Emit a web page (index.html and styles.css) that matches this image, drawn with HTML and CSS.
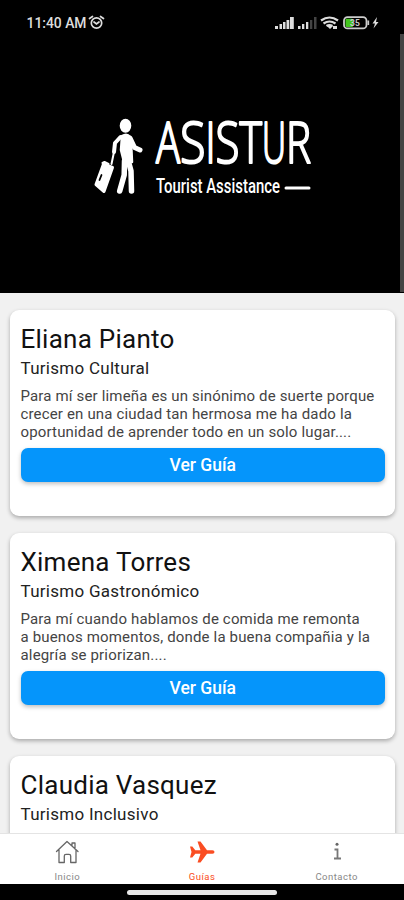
FILE: index.html
```
<!DOCTYPE html>
<html lang="es">
<head>
<meta charset="utf-8">
<meta name="viewport" content="width=device-width, initial-scale=1">
<title>Asistur</title>
<link rel="stylesheet" href="styles.css">
</head>
<body>
<div class="phone">
  <header class="status">
    <svg width="404" height="34" viewBox="0 0 404 34">
      <text class="clock" x="26.500" y="28" textLength="60" lengthAdjust="spacingAndGlyphs">11:40 AM</text>
      <g fill="none" stroke="#ddd" stroke-width="1.700" stroke-linecap="round">
        <circle cx="96.500" cy="23" r="5.200"/>
        <path d="M89.500 18.500l3-2M103.500 18.500l-3-2M94 22l2.500 2 2.500-2"/>
      </g>
      <g fill="#ddd">
        <path d="M275 26h3v3h-3zM279.500 24h2.500v5h-2.500zM283 22h2.500v7H283zM286.500 20h2.800v9h-2.800zM290 17h3.800v12H290z"/>
        <path d="M298 26h2.500v3H298zM302 24h2.300v5H302zM306 22h2.300v7H306z"/>
        <path fill="#444" d="M310 20h2.300v9H310zM314 17h2.500v12H314z"/>
      </g>
      <g fill="none" stroke="#ddd" stroke-width="2.200">
        <path d="M321 20.500q8.500-6 17 0M323.500 23.500q6-4 12 0M326.500 26q3-2 6 0"/>
      </g>
      <path d="M327 26l3 3 3-3zM333 26h4v3h-4z" fill="#ddd"/>
      <rect x="344" y="17.200" width="22.500" height="11.200" rx="3.500" fill="none" stroke="#ccc" stroke-width="1.800"/>
      <rect x="345.500" y="18.700" width="7.500" height="8.200" rx="1" fill="#43c51d"/>
      <path d="M368.300 20.500v4.500" stroke="#ccc" stroke-width="1.700"/>
      <text class="charge" x="350" y="26">35</text>
      <path fill="#ddd" d="M377 17l-4.500 6.500h2.500l-1.500 5 5-6.500H376z"/>
    </svg>
  </header>
  <main class="scroll">
    <div class="hero">
      <svg width="404" height="259" viewBox="0 34 404 259">
        <g fill="#fff" stroke="#fff" stroke-linecap="round" stroke-linejoin="round">
          <ellipse cx="125.500" cy="125.800" rx="5.800" ry="7" stroke="none"/>
          <path stroke-width="2.500" d="M122 136q5-3 8 1l1.500 14 .5 11h-8l-3-12z"/>
          <path fill="none" stroke-width="4" d="M120.500 137l-5.500 6-1 9"/>
          <path fill="none" stroke-width="2" d="M114 152l-2.500 12"/>
          <path fill="none" stroke-width="5" d="M130 138l4.500 9.500 5.500 2.500"/>
          <path fill="none" stroke-width="5.500" d="M124.500 161l-.3 14-4.500 16"/>
          <path fill="none" stroke-width="5.500" d="M127.500 158l3.500 13 .5 20"/>
          <path stroke-width="3" d="M103.500 164l9 3.500-8.500 24-8-7z"/>
          <path d="M102.500 163l2-1 4 2" fill="none" stroke-width="2"/>
        </g>
        <path d="M101.500 175l-2 5" stroke="#000" stroke-width="1.800" stroke-linecap="round"/>
        <text class="brand" y="162.500"><tspan x="156" textLength="24" lengthAdjust="spacingAndGlyphs">A</tspan><tspan x="180" textLength="25.500" lengthAdjust="spacingAndGlyphs">S</tspan><tspan x="205.500" textLength="10" lengthAdjust="spacingAndGlyphs">I</tspan><tspan x="215.500" textLength="24" lengthAdjust="spacingAndGlyphs">S</tspan><tspan x="239.500" textLength="22.500" lengthAdjust="spacingAndGlyphs">T</tspan><tspan x="262" textLength="24" lengthAdjust="spacingAndGlyphs">U</tspan><tspan x="286" textLength="25" lengthAdjust="spacingAndGlyphs">R</tspan></text>
        <text class="tagline" x="156" y="193" textLength="124" lengthAdjust="spacingAndGlyphs">Tourist Assistance</text>
        <path d="M286 188h23" stroke="#fff" stroke-width="3" stroke-linecap="round"/>
      </svg>
    </div>
    <section class="cards">
      <article class="card">
        <h2>Eliana Pianto</h2>
        <h3>Turismo Cultural</h3>
        <p>Para mí ser limeña es un sinónimo de suerte porque<br>crecer en una ciudad tan hermosa me ha dado la<br>oportunidad de aprender todo en un solo lugar....</p>
        <button>Ver Guía</button>
      </article>
      <article class="card">
        <h2>Ximena Torres</h2>
        <h3>Turismo Gastronómico</h3>
        <p>Para mí cuando hablamos de comida me remonta<br>a buenos momentos, donde la buena compañia y la<br>alegría se priorizan....</p>
        <button>Ver Guía</button>
      </article>
      <article class="card">
        <h2>Claudia Vasquez</h2>
        <h3>Turismo Inclusivo</h3>
      </article>
    </section>
    <i class="thumb"></i>
  </main>
  <nav class="tabs">
    <a class="tab">
      <svg width="26" height="26" viewBox="0 0 26 26" fill="none" stroke="#666" stroke-width="1.300" stroke-linejoin="round" stroke-linecap="round"><path d="M2.500 12.500L13 2.500 24 12.500M5 11v12.500h5.300V17q0-1.700 1.700-1.700h3q1.700 0 1.700 1.700v6.500h5.300V11M18 7V4h3v6"/></svg>
      <span>Inicio</span>
    </a>
    <a class="tab active">
      <svg width="26" height="26" viewBox="0 0 26 26" fill="#fa4d22"><path d="M1 7.500h2.300l3 3.700h5.200L8.500 2.500h3l6.500 8.700h5.500q2 .3 2 1.800t-2 1.800H18L11.500 23.500h-3l3-8.700H6.300L3.300 18.500H1L2.500 13z"/></svg>
      <span>Guías</span>
    </a>
    <a class="tab">
      <svg width="26" height="26" viewBox="0 0 26 26" fill="none" stroke="#777" stroke-width="1.800"><circle cx="13" cy="5.300" r="1.500" fill="#666" stroke="none"/><path d="M10.500 10.500h3v9M10 19.500h7"/></svg>
      <span>Contacto</span>
    </a>
  </nav>
  <footer class="gesture"><i></i></footer>
</div>
</body>
</html>
```
FILE: styles.css
```
* { box-sizing: border-box; }
body { margin: 0; background: #000; font-family: Roboto, "Liberation Sans", sans-serif; }
.phone { width: 404px; height: 900px; display: flex; flex-direction: column; overflow: hidden; }
.status { height: 34px; flex: none; background: #000; }
svg { display: block; }
.clock { font-size: 14px; font-weight: 500; fill: #ddd; }
.charge { font-size: 8.5px; font-weight: 700; fill: #ccc; }
.scroll { flex: 1; min-height: 0; overflow: hidden; position: relative; background: #f1f1f1; }
.thumb { position: absolute; right: 0; top: 0; width: 4px; height: 258px; background: #444; }
.hero { height: 259px; background: #000; }
.brand { font-family: "Open Sans", sans-serif; font-size: 57px; font-weight: 300; fill: #fff; stroke: #fff; stroke-width: 2.2; stroke-linejoin: round; }
.tagline { font-size: 19.5px; font-weight: 500; fill: #fff; }
.cards { display: flex; flex-direction: column; gap: 17px; padding: 16.5px 9px 0 9.5px; }
.card { height: 206px; flex: none; padding: 12px 10px 0 11px; background: #fff; border-radius: 9px; box-shadow: 0 2px 4px rgba(0, 0, 0, .3); }
h2, h3, p { margin: 0; font-weight: 400; white-space: nowrap; }
h2 { font-size: 26px; line-height: 34px; letter-spacing: .25px; color: #111; }
h3 { font-size: 17px; line-height: 24px; letter-spacing: .28px; color: #222; }
p { margin-top: 7px; font-size: 15px; line-height: 18px; letter-spacing: .16px; color: #444; }
button { display: block; width: 100%; height: 34px; margin-top: 7px; padding: 0; border: 0; border-radius: 7px; background: #0595fb; color: #fff; font: 500 17.5px/34px Roboto, sans-serif; box-shadow: 0 2px 4px rgba(0, 0, 0, .25); }
.tabs { flex: none; height: 51px; display: flex; background: #fff; border-top: 1px solid #e4e4e4; }
.tab { flex: 1; display: flex; flex-direction: column; align-items: center; padding-top: 5px; font-size: 9.5px; line-height: 12px; letter-spacing: .5px; color: #888; }
.tab span { margin-top: 6px; }
.active { color: #fa4d22; }
.gesture { flex: none; height: 16px; display: flex; justify-content: center; align-items: center; background: #000; }
.gesture i { width: 150px; height: 5px; border-radius: 3px; background: #e8e8e8; }
```
